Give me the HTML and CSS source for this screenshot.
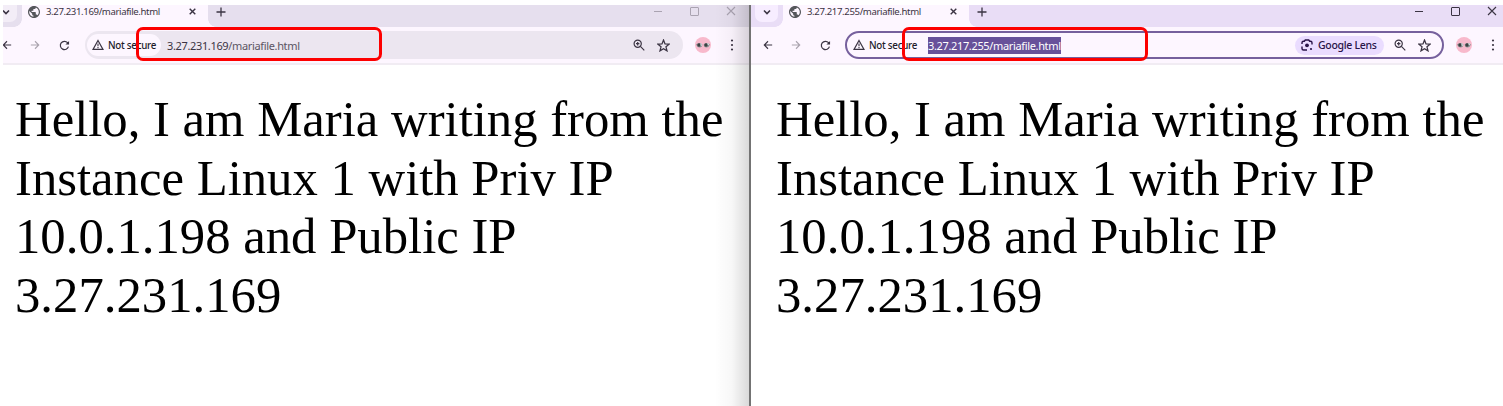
FILE: index.html
```html
<!DOCTYPE html>
<html lang="en">
<head>
<meta charset="utf-8">
<title>mariafile.html</title>
<link rel="stylesheet" href="styles.css">
</head>
<body>
<svg class="defs" width="0" height="0" aria-hidden="true">
  <symbol id="chevron" viewBox="0 0 10 10"><path d="M2 3.5 5 6.5 8 3.5" fill="none" stroke="currentColor" stroke-width="1.6"/></symbol>
  <symbol id="globe" viewBox="2 2 20 20"><path fill="currentColor" d="M12 2C6.48 2 2 6.48 2 12s4.480 10 10 10 10-4.480 10-10S17.520 2 12 2zm-1 17.930c-3.950-.49-7-3.850-7-7.930 0-.62.08-1.210.21-1.790L9 15v1c0 1.100.9 2 2 2v1.930zm6.900-2.540c-.26-.81-1-1.390-1.900-1.390h-1v-3c0-.55-.45-1-1-1H8v-2h2c.55 0 1-.45 1-1V7h2c1.100 0 2-.9 2-2v-.41c2.930 1.190 5 4.060 5 7.410 0 2.080-.8 3.970-2.100 5.390z"/></symbol>
  <symbol id="cross" viewBox="0 0 10 10"><path d="M1 1 9 9M9 1 1 9" fill="none" stroke="currentColor" stroke-width="var(--w,1.4)"/></symbol>
  <symbol id="plus" viewBox="0 0 10 10"><path d="M5 .5V9.500M.5 5H9.500" fill="none" stroke="currentColor" stroke-width="1.3"/></symbol>
  <symbol id="arrow" viewBox="0 0 12 12"><path d="M11 6H1.600M6 1.500 1.500 6 6 10.500" fill="none" stroke="currentColor" stroke-width="1.3"/></symbol>
  <symbol id="reload" viewBox="0 0 12 12"><path d="M10.300 7.200A4.500 4.500 0 1 1 9.300 2.900L10.500 4.200" fill="none" stroke="currentColor" stroke-width="1.300"/><path d="M11 1V5H7Z" fill="currentColor"/></symbol>
  <symbol id="warning" viewBox="0 0 12 12"><path d="M6 1.500 11 10.400H1Z" fill="none" stroke="currentColor" stroke-width="1.200"/><path d="M6 4.500V7.300M6 8.100V9.200" stroke="currentColor" stroke-width="1.100"/></symbol>
  <symbol id="magnify" viewBox="0 0 12 12"><circle cx="4.700" cy="4.700" r="3.600" fill="none" stroke="currentColor" stroke-width="1.200"/><path d="M7.400 7.400 11.300 11.300M4.700 3V6.400M3 4.700H6.400" stroke="currentColor" stroke-width="1.200"/></symbol>
  <symbol id="star" viewBox="0 0 12 12"><path d="M6 1 7.400 4.500 11.200 4.800 8.300 7.200 9.200 10.900 6 8.900 2.800 10.900 3.700 7.200.8 4.800 4.600 4.500Z" fill="none" stroke="currentColor" stroke-width="1.200"/></symbol>
  <symbol id="dots" viewBox="0 0 4 12"><g fill="currentColor"><circle cx="2" cy="1.500" r="1.100"/><circle cx="2" cy="6" r="1.100"/><circle cx="2" cy="10.500" r="1.100"/></g></symbol>
  <symbol id="lens" viewBox="0 0 12 12"><path d="M1 5V3.800Q1 2.300 2.500 2.300H3.300L4.300 1H7.700L8.700 2.300H9.500Q11 2.300 11 3.800V5.500M1 7.500V9.500Q1 11 2.500 11H6" fill="none" stroke="currentColor" stroke-width="1.400"/><circle cx="6" cy="6.300" r="1.900" fill="currentColor"/><circle cx="10" cy="10" r="1.100" fill="currentColor"/></symbol>
  <symbol id="avatar" viewBox="0 0 16 16"><circle cx="8" cy="8" r="8" fill="#f8b9cc"/><path d="M1 7.500Q4 4.500 7.300 7.200Q7.400 10.500 4.500 10.500Q2 10.300 1 7.500ZM8.700 7.200Q12 4.500 15 7.500Q14 10.300 11.500 10.500Q8.600 10.500 8.700 7.200Z" fill="#8f9496"/><circle cx="4" cy="8" r="1.700" fill="#3c4042"/><circle cx="11" cy="8" r="1.700" fill="#3c4042"/><path d="M5.800 6.300 6.400 8.800M12.700 6.300 13.600 8" stroke="#d7e4e4" stroke-width="1.200"/></symbol>
</svg>

<main class="desktop">
  <section class="window inactive">
    <div class="frame">
      <header class="tabstrip">
        <span class="search"><svg><use href="#chevron"/></svg></span>
        <div class="tab"><svg class="globe"><use href="#globe"/></svg><span class="title">3.27.231.169/mariafile.html</span><svg class="close"><use href="#cross"/></svg></div>
        <svg class="plus"><use href="#plus"/></svg>
        <div class="controls"><i class="min"></i><i class="max"></i><svg class="exit"><use href="#cross"/></svg></div>
      </header>
      <nav class="toolbar">
        <span class="btn"><svg><use href="#arrow"/></svg></span>
        <span class="btn forward"><svg><use href="#arrow"/></svg></span>
        <span class="btn reload"><svg><use href="#reload"/></svg></span>
        <div class="omnibox">
          <span class="security"><svg><use href="#warning"/></svg><span class="label">Not secure</span></span>
          <span class="url">3.27.231.169<span class="path">/mariafile.html</span></span>
          <span class="actions"><svg><use href="#magnify"/></svg><svg class="star"><use href="#star"/></svg></span>
          <div class="highlight"></div>
        </div>
        <svg class="avatar"><use href="#avatar"/></svg>
        <svg class="dots"><use href="#dots"/></svg>
      </nav>
      <article class="page">Hello, I am Maria writing from the<br>Instance Linux 1 with Priv IP<br>10.0.1.198 and Public IP<br>3.27.231.169</article>
    </div>
    <div class="shade"></div>
  </section>
  <section class="window active">
    <div class="frame">
      <header class="tabstrip">
        <span class="search"><svg><use href="#chevron"/></svg></span>
        <div class="tab"><svg class="globe"><use href="#globe"/></svg><span class="title">3.27.217.255/mariafile.html</span><svg class="close"><use href="#cross"/></svg></div>
        <svg class="plus"><use href="#plus"/></svg>
        <div class="controls"><i class="min"></i><i class="max"></i><svg class="exit"><use href="#cross"/></svg></div>
      </header>
      <nav class="toolbar">
        <span class="btn"><svg><use href="#arrow"/></svg></span>
        <span class="btn forward"><svg><use href="#arrow"/></svg></span>
        <span class="btn reload"><svg><use href="#reload"/></svg></span>
        <div class="omnibox">
          <span class="security"><svg><use href="#warning"/></svg><span class="label">Not secure</span></span>
          <span class="url">3.27.217.255/mariafile.html</span>
          <span class="actions"><span class="lens"><svg><use href="#lens"/></svg><span>Google Lens</span></span><svg><use href="#magnify"/></svg><svg class="star"><use href="#star"/></svg></span>
          <div class="highlight"></div>
        </div>
        <svg class="avatar"><use href="#avatar"/></svg>
        <svg class="dots"><use href="#dots"/></svg>
      </nav>
      <article class="page">Hello, I am Maria writing from the<br>Instance Linux 1 with Priv IP<br>10.0.1.198 and Public IP<br>3.27.231.169</article>
    </div>
  </section>
</main>
</body>
</html>
```

FILE: styles.css
```css
* { box-sizing: border-box; }
body { margin: 0; background: #fff; overflow: hidden; font-family: "Noto Sans", sans-serif; color: #3b3443; }
svg { display: block; flex: none; }
.defs { position: absolute; }
.desktop { display: flex; height: 406px; padding: 5px 0 0 3px; }
.window { position: relative; overflow: hidden; flex: none; }
.inactive { --strip: #e6dfee; --search: #f3edf7; width: 746px; }
.active { --strip: #e9ddf6; --search: #f7edff; width: 754px; border-left: 2px solid #737373; }
.frame { width: 753px; }
.inactive .frame { margin-left: -13px; width: 759px; }

.tabstrip { display: flex; height: 22px; background: var(--strip); }
.search { display: flex; justify-content: center; width: 23px; height: 17px; margin-left: 4px; border-radius: 0 0 7px 7px; background: var(--search); }
.search svg { width: 10px; height: 10px; margin-top: 2px; }
.tab { position: relative; display: flex; width: 186px; height: 22px; margin-left: 5px; padding-left: 6px; background: #fdf6ff; }
.tab::before, .tab::after { content: ""; position: absolute; bottom: 0; width: 8px; height: 8px; }
.tab::before { left: -8px; background: radial-gradient(circle at 0 0, transparent 7.5px, #fdf6ff 8px); }
.tab::after { right: -8px; background: radial-gradient(circle at 100% 0, transparent 7.5px, #fdf6ff 8px); }
.globe { width: 12px; height: 12px; color: #55575b; margin-top: 1px; }
.title { width: 126px; margin-left: 6px; font-size: 9.6px; line-height: 14px; letter-spacing: -.37px; white-space: nowrap; }
.close { width: 7px; height: 7px; margin: 3px 0 0 17px; --w: 2px; }
.plus { width: 10px; height: 10px; margin: 2px 0 0 8px; }
.controls { display: flex; width: 82px; margin-left: 428px; }
.min { width: 8px; height: 1px; background: currentColor; margin-top: 6px; }
.max { width: 9px; height: 9px; border: 1px solid currentColor; border-radius: 1px; margin: 2px 0 0 28px; }
.exit { width: 10px; height: 10px; --w: 1.1px; margin: 1px 0 0 27px; }
.inactive .controls { color: #aaa3b1; }

.toolbar { display: flex; align-items: center; height: 38px; padding-left: 3px; background: #fdf6ff; border-bottom: 2px solid #f1ecf3; }
.btn { display: flex; justify-content: center; width: 28px; flex: none; }
.btn svg { width: 10px; height: 10px; }
.forward { transform: scaleX(-1); color: #aaa3ae; }
.reload { margin-left: 1px; }
.reload svg { width: 11px; height: 11px; }
.omnibox { position: relative; display: flex; flex: none; align-items: center; width: 599px; height: 28px; margin-left: 6px; border-radius: 14px; background: #ece6f0; }
.active .omnibox { background: #fdf6ff; border: 2px solid #76609d; }
.inactive .omnibox { width: 598px; margin-left: 7px; }
.security { display: flex; align-items: center; height: 22px; width: 74px; margin-left: 2px; padding-left: 5px; border-radius: 11px; background: #fdf6ff; }
.active .security { margin-left: 1px; }
.security svg { width: 12px; height: 12px; }
.label { margin-left: 4px; font-size: 9.8px; font-weight: 500; letter-spacing: -.27px; white-space: nowrap; color: #221b2b; }
.url { flex: none; margin-left: 6px; height: 17px; line-height: 17px; font-size: 11px; letter-spacing: -.35px; white-space: nowrap; }
.path { color: #5b5563; }
.active .url { background: #67519a; color: #fff; }
.actions { display: flex; align-items: center; margin-left: auto; margin-right: 13px; }
.active .actions { margin-right: 11px; }
.actions > svg { width: 12px; height: 12px; }
.actions > .star { width: 13px; height: 13px; margin-left: 12px; }
.lens { display: flex; align-items: center; width: 89px; height: 19px; margin-right: 10px; padding-left: 6px; border-radius: 10px; background: #eadcff; color: #291348; font-size: 10.5px; font-weight: 500; letter-spacing: -.3px; white-space: nowrap; }
.lens svg { width: 12px; height: 12px; margin-right: 5px; }
.highlight { position: absolute; left: 51px; top: -4px; width: 246px; height: 34px; border: 3px solid #fd0000; border-radius: 7px; }
.active .highlight { left: 55px; top: -6px; }
.avatar { width: 16px; height: 16px; margin-left: 12px; }
.dots { width: 4px; height: 12px; margin-left: 19px; }
.page { padding: 25px 0 0 25px; font: 50.72px/58.67px "Liberation Serif", serif; color: #000; white-space: nowrap; }
.shade { position: absolute; top: 0; right: 0; bottom: 0; width: 34px; background: linear-gradient(to right, transparent, rgba(0,0,0,.03) 50%, rgba(0,0,0,.15)); }
```
